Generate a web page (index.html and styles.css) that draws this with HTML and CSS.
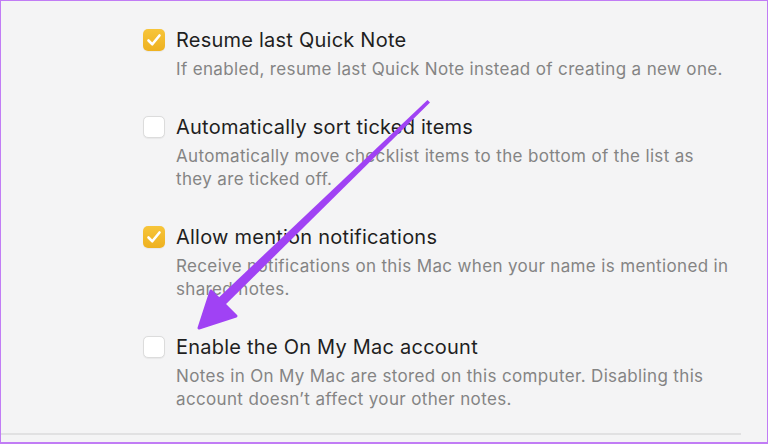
FILE: index.html
```html
<!DOCTYPE html>
<html>
<head>
<meta charset="utf-8">
<link rel="stylesheet" href="styles.css">
</head>
<body>
<div class="frame">
  <div class="list">
    <div class="item">
      <span class="box checked"><svg viewBox="0 0 22 22" width="22" height="22"><path d="M5.5 11.5 L9.3 15.3 L16.5 6.5" fill="none" stroke="#fff" stroke-width="2.6" stroke-linecap="round" stroke-linejoin="round"/></svg></span>
      <div class="text">
        <div class="title">Resume last Quick Note</div>
        <div class="desc">If enabled, resume last Quick Note instead of creating a new one.</div>
      </div>
    </div>
    <div class="item">
      <span class="box"></span>
      <div class="text">
        <div class="title">Automatically sort ticked items</div>
        <div class="desc">Automatically move checklist items to the bottom of the list as<br>they are ticked off.</div>
      </div>
    </div>
    <div class="item">
      <span class="box checked"><svg viewBox="0 0 22 22" width="22" height="22"><path d="M5.5 11.5 L9.3 15.3 L16.5 6.5" fill="none" stroke="#fff" stroke-width="2.6" stroke-linecap="round" stroke-linejoin="round"/></svg></span>
      <div class="text">
        <div class="title">Allow mention notifications</div>
        <div class="desc">Receive notifications on this Mac when your name is mentioned in<br>shared notes.</div>
      </div>
    </div>
    <div class="item">
      <span class="box"></span>
      <div class="text">
        <div class="title">Enable the On My Mac account</div>
        <div class="desc">Notes in On My Mac are stored on this computer. Disabling this<br>account doesn’t affect your other notes.</div>
      </div>
    </div>
  </div>
  <div class="divider"></div>
  <svg class="arrow" viewBox="0 0 768 444" width="768" height="444">
    <polygon points="427.5,100 430,102.5 220,310 213,303" fill="#a042f4"/>
    <polygon points="199,328 211,291 236,316" fill="#a042f4" stroke="#a042f4" stroke-width="3" stroke-linejoin="round"/>
  </svg>
</div>
</body>
</html>
```

FILE: styles.css
```css
* { box-sizing: border-box; }
html, body { margin: 0; padding: 0; }
body {
  width: 768px;
  height: 444px;
  overflow: hidden;
  background: #f4f4f5;
  font-family: Inter, "Noto Sans", "Liberation Sans", sans-serif;
}
.frame {
  position: relative;
  width: 768px;
  height: 444px;
  border: 1px solid #c17cf5;
  border-width: 1px 1px 2px 1px;
  background: #f4f4f5;
  display: flex;
  flex-direction: column;
}
.list {
  display: flex;
  flex-direction: column;
  gap: 34px;
  padding: 27px 0 0 142px;
  flex: 1;
}
.item {
  display: flex;
  align-items: flex-start;
  gap: 11px;
}
.box {
  flex: none;
  width: 22px;
  height: 22px;
  margin-top: 1px;
  border-radius: 5px;
  background: #fff;
  border: 1px solid #dcdcdc;
  box-shadow: 0 0.5px 1px rgba(0,0,0,0.05);
  display: flex;
  align-items: center;
  justify-content: center;
}
.box.checked {
  border: none;
  background: linear-gradient(#f7c53a, #eeb120);
}
.box svg { display: block; }
.title {
  font-size: 20px;
  line-height: 24px;
  color: #1f1f1f;
  letter-spacing: 0.23px;
}
.desc {
  margin-top: 6px;
  font-size: 17px;
  line-height: 23px;
  color: #848484;
  letter-spacing: 0.35px;
}
.divider {
  height: 2px;
  width: 740px;
  background: #e1e1e2;
  margin-bottom: 7px;
}
.arrow {
  position: absolute;
  left: -1px;
  top: -1px;
  pointer-events: none;
}
```
